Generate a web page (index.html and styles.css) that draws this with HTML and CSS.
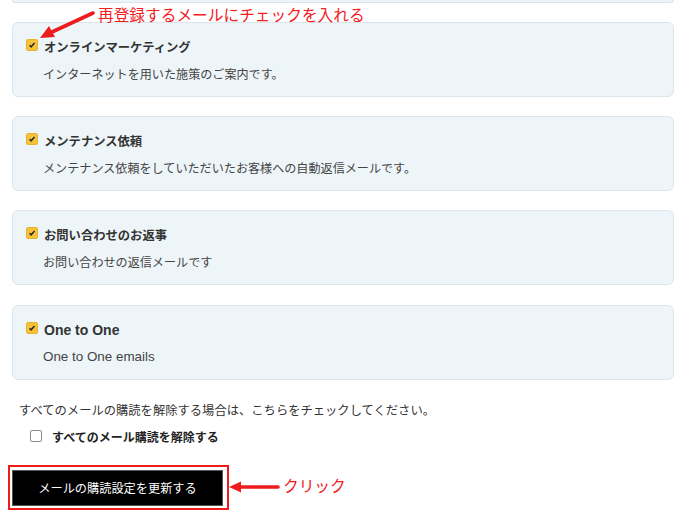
FILE: index.html
```html
<!DOCTYPE html>
<html lang="ja">
<head>
    <meta charset="UTF-8">
    <title>メール購読設定</title>
    <link rel="stylesheet" href="styles.css">
</head>
<body>
    <div class="page">
        <div class="card card-stub"></div>

        <div class="card">
            <div class="card-title">
                <span class="check on"><svg viewBox="0 0 12 12"><path d="M3 6.2 L5 8.2 L9 3.6" /></svg></span>
                オンラインマーケティング
            </div>
            <div class="card-desc">インターネットを用いた施策のご案内です。</div>
        </div>

        <div class="card">
            <div class="card-title">
                <span class="check on"><svg viewBox="0 0 12 12"><path d="M3 6.2 L5 8.2 L9 3.6" /></svg></span>
                メンテナンス依頼
            </div>
            <div class="card-desc">メンテナンス依頼をしていただいたお客様への自動返信メールです。</div>
        </div>

        <div class="card">
            <div class="card-title">
                <span class="check on"><svg viewBox="0 0 12 12"><path d="M3 6.2 L5 8.2 L9 3.6" /></svg></span>
                お問い合わせのお返事
            </div>
            <div class="card-desc">お問い合わせの返信メールです</div>
        </div>

        <div class="card card-last">
            <div class="card-title latin">
                <span class="check on"><svg viewBox="0 0 12 12"><path d="M3 6.2 L5 8.2 L9 3.6" /></svg></span>
                One to One
            </div>
            <div class="card-desc latin">One to One emails</div>
        </div>

        <p class="note">すべてのメールの購読を解除する場合は、こちらをチェックしてください。</p>
        <label class="unsub">
            <span class="check off"></span>
            すべてのメール購読を解除する
        </label>

        <div class="submit-row">
            <div class="highlight">
                <button class="submit">メールの購読設定を更新する</button>
            </div>
        </div>

        <!-- annotations -->
        <div class="note-top">再登録するメールにチェックを入れる</div>
        <svg class="arrow arrow-top" width="60" height="40" viewBox="0 0 60 40">
            <line x1="55" y1="3" x2="14" y2="22" />
            <polygon points="2,28 11,16 17,27" />
        </svg>
        <div class="note-click">クリック</div>
        <svg class="arrow arrow-click" width="52" height="14" viewBox="0 0 52 14">
            <line x1="12" y1="7" x2="50" y2="7" />
            <polygon points="1,7 13,1.5 13,12.5" />
        </svg>
    </div>
</body>
</html>
```

FILE: styles.css
```css
body {
    margin: 0;
    background: #fff;
    font-family: "Noto Sans CJK JP", "Noto Sans", sans-serif;
    color: #333;
}
.page {
    position: relative;
    padding: 0 14px 0 12px;
}
.card {
    background: #eef5f9;
    border: 1px solid #dbe6ec;
    border-radius: 6px;
    height: 75px;
    box-sizing: border-box;
    padding: 14px 14px 0 13px;
    margin-bottom: 19px;
}
.card-stub {
    height: 3px;
    padding: 0;
    border-top: none;
    border-radius: 0 0 6px 6px;
}
.card-last {
    margin-top: 20px;
}
.card-title {
    display: flex;
    align-items: center;
    gap: 6px;
    height: 20px;
    font-size: 12.3px;
    font-weight: bold;
    color: #333;
}
.card-title.latin {
    font-family: "Liberation Sans", "Noto Sans", sans-serif;
    font-size: 14px;
}
.card-desc {
    margin-top: 7px;
    padding-left: 17px;
    height: 20px;
    line-height: 20px;
    font-size: 12.1px;
    color: #444;
}
.card-desc.latin {
    font-family: "Liberation Sans", "Noto Sans", sans-serif;
    font-size: 13.4px;
}
.check {
    display: inline-block;
    width: 12px;
    height: 12px;
    box-sizing: border-box;
    border-radius: 2px;
    flex: none;
    margin-top: -4px;
}
.check.on {
    background: #f6c23a;
    border: 1px solid #e9b22c;
}
.check.on svg {
    display: block;
    width: 10px;
    height: 10px;
}
.check.on path {
    fill: none;
    stroke: #2a2a2a;
    stroke-width: 1.8;
}
.check.off {
    background: #fff;
    border: 1px solid #8a8a8a;
    margin-top: -1px;
}
.note {
    margin: 20px 0 0 7px;
    line-height: 20px;
    font-size: 12.3px;
    color: #333;
}
.unsub {
    display: flex;
    align-items: center;
    gap: 10px;
    margin: 6px 0 0 18px;
    height: 20px;
    font-size: 12px;
    font-weight: bold;
    color: #222;
}
.submit-row {
    margin-top: 19px;
    margin-left: -4px;
}
.highlight {
    display: inline-block;
    border: 2px solid #f01c1c;
    padding: 3px 4px 2px 2px;
}
.submit {
    display: block;
    width: 211px;
    height: 36px;
    background: #000;
    color: #fff;
    border: 1px solid #555;
    font-family: "Noto Sans CJK JP", sans-serif;
    font-size: 12.2px;
    cursor: pointer;
}
.note-top,
.note-click {
    position: absolute;
    color: #f2201e;
    font-size: 15.7px;
    line-height: 20px;
}
.note-top {
    left: 98px;
    top: 5px;
}
.note-click {
    left: 283px;
    top: 476px;
}
.arrow {
    position: absolute;
}
.arrow line {
    stroke: #ee1d1d;
    stroke-width: 3.6;
    stroke-linecap: round;
}
.arrow polygon {
    fill: #ee1d1d;
}
.arrow-top {
    left: 38px;
    top: 10px;
}
.arrow-click {
    left: 228px;
    top: 480px;
}
```
